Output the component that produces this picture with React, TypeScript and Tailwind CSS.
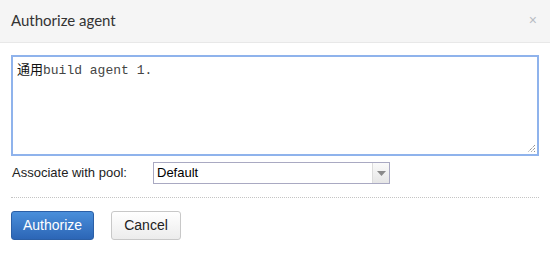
import React from "react"

const AuthorizeAgentDialog = () => {
  return (
    <div className="w-[550px] h-[256px] bg-white font-['Liberation_Sans',Arial,sans-serif] text-[13px] text-[#222]">
      {/* header */}
      <div className="h-[43px] bg-[#f5f5f5] border-b border-[#e8e8e8] flex items-center justify-between pl-[11px] pr-[13px]">
        <h3 className="font-['Lato',sans-serif] text-[15px] text-[#333] mt-[-2px]">Authorize agent</h3>
        <span className="text-[#b8bcc4] text-[14px] leading-none mt-[-2px]">×</span>
      </div>

      {/* body */}
      <div className="px-[11px] pt-[12px]">
        <div className="h-[101px] border-2 border-[#8fb3ec] relative px-[4px] pt-[4px]">
          <div className="text-[13px] text-[#444] leading-[16px] font-['Liberation_Mono','Noto_Sans_CJK_SC',monospace]">
            <span className="font-['Noto_Sans_CJK_SC',sans-serif] text-[#111]">通用</span>build agent 1.
          </div>
          <svg className="absolute right-[1px] bottom-[1px]" width="9" height="9" viewBox="0 0 9 9">
            <path d="M8 1 L1 8 M8 4 L4 8 M8 7 L7 8" stroke="#666" strokeWidth="1" strokeDasharray="1 1" />
          </svg>
        </div>

        <div className="flex items-center mt-[6px] h-[22px]">
          <label className="w-[142px] pl-[1px] text-[13px] text-[#222]">Associate with pool:</label>
          <div className="w-[237px] h-[22px] border border-[#a9a9c2] flex items-stretch bg-white">
            <span className="flex-1 pl-[3px] leading-[20px] text-[13px] text-black">Default</span>
            <span className="w-[17px] border-l border-[#dcdcdc] bg-gradient-to-b from-[#fafafa] to-[#e6e6e6] flex items-center justify-center">
              <svg width="9" height="5" viewBox="0 0 9 5">
                <path d="M0 0 H9 L4.5 5 Z" fill="#8a8a8a" />
              </svg>
            </span>
          </div>
        </div>

        <div className="mt-[13px] border-t border-dotted border-[#c4c4c4]" />

        <div className="flex gap-[17px] mt-[13px]">
          <button className="w-[83px] h-[29px] rounded-[3px] border border-[#2b5fa6] bg-gradient-to-b from-[#4a8fdb] to-[#2c66b6] text-white text-[14px]">
            Authorize
          </button>
          <button className="w-[70px] h-[29px] rounded-[3px] border border-[#c8c8c8] bg-gradient-to-b from-white to-[#ececec] text-[#222] text-[14px]">
            Cancel
          </button>
        </div>
      </div>
    </div>
  )
}

export default function App() {
  return <AuthorizeAgentDialog />
}
